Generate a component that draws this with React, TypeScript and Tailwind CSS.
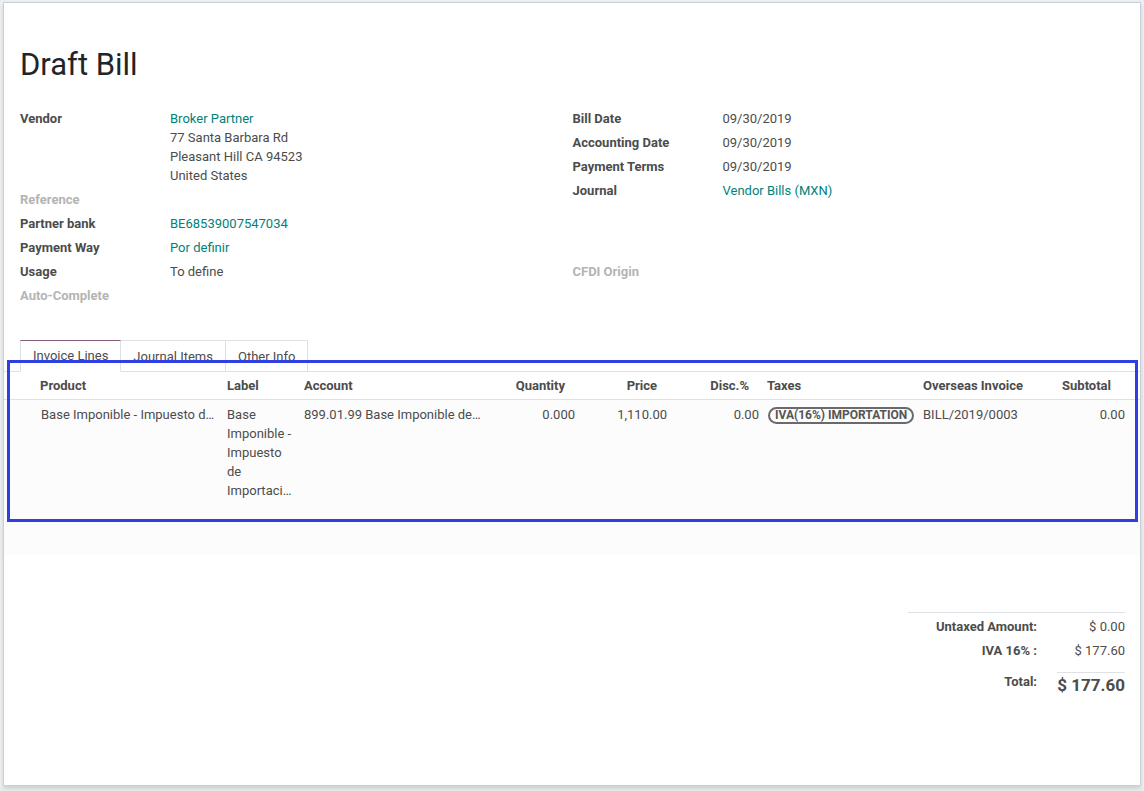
import React from "react";

const teal = "text-[#00827c]";

function Field({ label, muted, children, multi }: { label: string; muted?: boolean; children?: React.ReactNode; multi?: boolean }) {
  return (
    <div className={`flex py-[2.5px] leading-[19px] ${multi ? "" : "min-h-[24px]"}`}>
      <div className={`w-[150px] shrink-0 font-bold ${muted ? "text-[#b4b4b4]" : "text-[#4c4c4c]"}`}>{label}</div>
      <div className="text-[#4c4c4c]">{children}</div>
    </div>
  );
}

const cols = "grid grid-cols-[32px_187px_77px_190px_89px_92px_92px_156px_126px_84px_11px]";

export default function App() {
  return (
    <div className="relative w-[1144px] h-[791px] bg-[#eceeef] overflow-hidden [font-family:Roboto,sans-serif] text-[13px] text-[#4c4c4c]">
      <div className="ml-[3px] mt-[2px] w-[1138px] h-[784px] bg-white border border-[#c9cfd6] shadow-[0_3px_4px_rgba(0,0,0,0.12)] pl-[16px] pr-[15px] pt-[43px]">
        <h1 className="text-[31px] leading-[37px] text-[#212529] font-normal">Draft Bill</h1>

        <div className="grid grid-cols-2 mt-[23px]">
          <div>
            <Field label="Vendor" multi>
              <div className={teal}>Broker Partner</div>
              <div>77 Santa Barbara Rd</div>
              <div>Pleasant Hill CA 94523</div>
              <div>United States</div>
            </Field>
            <Field label="Reference" muted />
            <Field label="Partner bank"><span className={teal}>BE68539007547034</span></Field>
            <Field label="Payment Way"><span className={teal}>Por definir</span></Field>
            <Field label="Usage">To define</Field>
            <Field label="Auto-Complete" muted />
          </div>
          <div>
            <Field label="Bill Date">09/30/2019</Field>
            <Field label="Accounting Date">09/30/2019</Field>
            <Field label="Payment Terms">09/30/2019</Field>
            <Field label="Journal"><span className={teal}>Vendor Bills (MXN)</span></Field>
            <div className="h-[57px]" />
            <Field label="CFDI Origin" muted />
          </div>
        </div>

        <div className="-ml-[16px] -mr-[15px] mt-[33px]">
          <div className="flex h-[32px] border-b border-[#dee2e6] pl-[16px]">
            <div className="h-[32px] px-[12px] flex items-center border border-[#dee2e6] border-t-[#875A7B] border-b-white bg-white text-[#4c4c4c]">Invoice Lines</div>
            <div className="h-[32px] px-[12px] flex items-center border border-l-0 border-[#dee2e6] border-b-0 text-[#4c4c4c]">Journal Items</div>
            <div className="h-[32px] px-[12px] flex items-center border border-l-0 border-[#dee2e6] border-b-0 text-[#4c4c4c]">Other Info</div>
          </div>

          <div className={`${cols} h-[28px] items-center border-b border-[#dee2e6] font-bold text-[#4c4c4c]`}>
            <div />
            <div className="px-[4px]">Product</div>
            <div className="px-[4px]">Label</div>
            <div className="px-[4px]">Account</div>
            <div className="pl-[4px] pr-[14px] text-right">Quantity</div>
            <div className="pl-[4px] pr-[14px] text-right">Price</div>
            <div className="pl-[4px] pr-[14px] text-right">Disc.%</div>
            <div className="px-[4px]">Taxes</div>
            <div className="px-[4px]">Overseas Invoice</div>
            <div className="pl-[4px] pr-[18px] text-right whitespace-nowrap">Subtotal</div>
            <div />
          </div>

          <div className={`${cols} leading-[19px] pt-[4.5px] pb-[5px] bg-[#fcfcfc] text-[#4c4c4c]`}>
            <div />
            <div className="pl-[5px] pr-[8px] whitespace-nowrap overflow-hidden text-ellipsis">Base Imponible - Impuesto de Importación</div>
            <div className="px-[4px]">Base Imponible - Impuesto de Importaci…</div>
            <div className="pl-[4px] pr-[7px] whitespace-nowrap overflow-hidden text-ellipsis">899.01.99 Base Imponible de Importación</div>
            <div className="px-[4px] text-right">0.000</div>
            <div className="px-[4px] text-right">1,110.00</div>
            <div className="px-[4px] text-right">0.00</div>
            <div className="pl-[5px] pr-[2px]">
              <span className="inline-flex items-center h-[17px] px-[5px] rounded-full border-2 border-[#6a6a6a] text-[12px] font-bold leading-[13px] text-[#555] whitespace-nowrap">IVA(16%) IMPORTATION</span>
            </div>
            <div className="px-[4px]">BILL/2019/0003</div>
            <div className="px-[4px] text-right">0.00</div>
            <div />
          </div>
          <div className="h-[50px] bg-[#fcfcfc]" />
        </div>

        <div className="flex justify-end mt-[57px]">
          <div className="w-[217px] border-t border-[#dee2e6]">
            <div className="flex leading-[19px] pt-[4px] pb-[2px]">
              <div className="w-[137px] pr-[8px] text-right font-bold text-[#4c4c4c]">Untaxed Amount:</div>
              <div className="flex-1 text-right">$ 0.00</div>
            </div>
            <div className="flex leading-[19px] pt-[3px] pb-[12px]">
              <div className="w-[137px] pr-[8px] text-right font-bold text-[#4c4c4c]">IVA 16% :</div>
              <div className="flex-1 text-right">$ 177.60</div>
            </div>
            <div className="flex">
              <div className="w-[137px] pr-[8px] text-right font-bold leading-[19px] text-[#4c4c4c]">Total:</div>
              <div className="flex-1 text-right">
                <span className="inline-block border-t border-[#dee2e6] text-[17px] font-bold leading-[24px] text-[#4c4c4c]">$ 177.60</span>
              </div>
            </div>
          </div>
        </div>
      </div>

      <div className="absolute left-[7px] top-[360px] w-[1131px] h-[162px] border-[3px] border-[#2f3fe4] pointer-events-none" />
    </div>
  );
}
